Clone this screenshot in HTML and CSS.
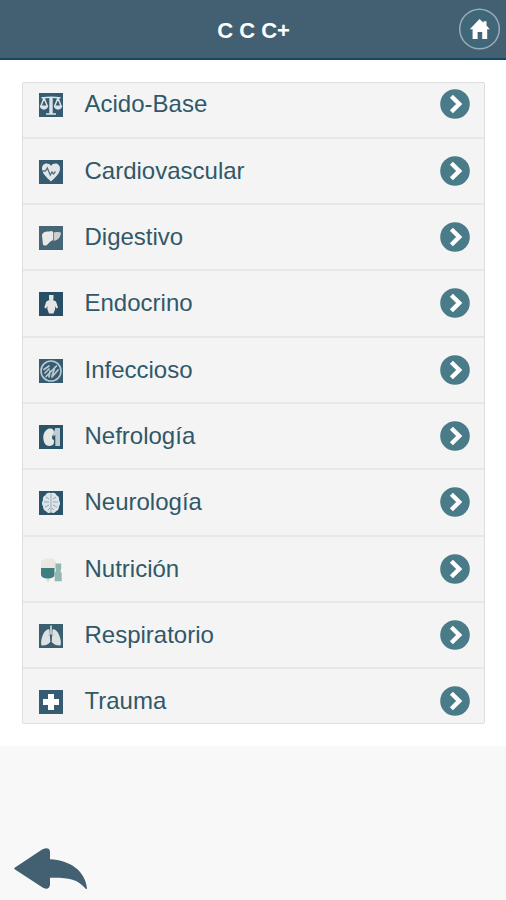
FILE: index.html
```html
<!DOCTYPE html>
<html lang="es">
<head>
<meta charset="utf-8">
<title>C C C+</title>
<link rel="stylesheet" href="styles.css">
</head>
<body>
<svg class="defs" aria-hidden="true">
  <symbol id="chevron" viewBox="0 0 30 30"><circle cx="15" cy="15" r="14.8" fill="#4a7b89"/><path d="M11.400 7.300l7.800 7.700-7.800 7.700" fill="none" stroke="#fff" stroke-width="4.400"/></symbol>
</svg>
<header class="bar">
  <h1 class="title">C C C+</h1>
  <a class="home" href="#" aria-label="Inicio"><svg viewBox="0 0 42 42"><circle cx="21.500" cy="21" r="19.800" fill="#406777" stroke="#9babb5" stroke-width="1.5"/><path d="M21.500 11l4 3.800v-1.600h3v4.400l3.300 3.700h-2.600V31h-5v-7h-4.600v7h-5v-9.700h-2.800z" fill="#fff"/></svg></a>
</header>
<main class="content">
  <ul class="list">
    <li class="row"><svg class="icon" viewBox="0 0 24 24"><path fill="#355c70" d="M0 0h24v24H0z"/><path d="M2.500 4.800c4 0 6-.5 9.500-.5s5.500.5 9.500.5M7 21h10M5 5l-3 8M5 5l3.300 8M19 5l-3.300 8M19 5l3 8" fill="none" stroke="#dde3e6" stroke-width="1.500"/><path d="M10.300 4.500h3.400V21h-3.400zM.7 12.500h8.500c0 5.500-8.500 5.500-8.500 0zM14.800 12.500h8.500c0 5.500-8.500 5.500-8.500 0z" fill="#dde3e6"/></svg><span class="label">Acido-Base</span><svg class="go"><use href="#chevron"/></svg></li>
    <li class="row"><svg class="icon" viewBox="0 0 24 24"><path fill="#355c70" d="M0 0h24v24H0z"/><path d="M12 21.500C7 17 3 13 3 8.500 3 3 9.500 2 12 6c2.500-4 9-3 9 2.500 0 4.500-4 8.500-9 13z" fill="#e3e6e8"/><path d="M3 11h3.500l1.800-3 3 7 1.700-3 1.500 2 2-2.500" fill="none" stroke="#557483" stroke-width="1.300"/></svg><span class="label">Cardiovascular</span><svg class="go"><use href="#chevron"/></svg></li>
    <li class="row"><svg class="icon" viewBox="0 0 24 24"><path fill="#466575" d="M0 0h24v24H0z"/><path d="M3 9.500c.5-3.500 4-4.200 7.300-3.900 1.500-1 3-.5 4 .7L14 14c-2.500 1-4 3-5.800 4.700-1.700 1.500-3.900 1-4.300-.7z" fill="#e9e9e9"/><path d="M15 6.500c3-.5 5.500-.7 7 .3-.2 4-3.200 7.700-7.300 8z" fill="#cbd0d3"/></svg><span class="label">Digestivo</span><svg class="go"><use href="#chevron"/></svg></li>
    <li class="row"><svg class="icon" viewBox="0 0 24 24"><path fill="#294f67" d="M0 0h24v24H0z"/><path d="M10 3h4.500v3.500L14 8l3 1.500 2 6-1.700 1-1.400-2.500.3 3-1.700 4.500H10L8.300 17l.3-3-1.600 2.500-1.700-1 2-6 3-1.500-.3-1.500z" fill="#e4e4e2"/></svg><span class="label">Endocrino</span><svg class="go"><use href="#chevron"/></svg></li>
    <li class="row"><svg class="icon" viewBox="0 0 24 24"><path fill="#355c70" d="M0 0h24v24H0z"/><g fill="none" stroke="#bdc8ce"><circle cx="12" cy="12" r="10" stroke-width="1.600"/><path d="M5 10.500L10 7M7 17.500L17.500 7M13 18l6-7M6 14l4-4M11 12l-1 6M16 8l-3 9" stroke-width="1.700" stroke-linecap="round"/></g></svg><span class="label">Infeccioso</span><svg class="go"><use href="#chevron"/></svg></li>
    <li class="row"><svg class="icon" viewBox="0 0 24 24"><path fill="#295469" d="M0 0h24v24H0z"/><path d="M14.800 9c1-3-1-6-4-5.500-4 .6-6.500 4.500-6.500 9 0 5 2.500 8.500 6 8.500 4 0 5.300-3 4.500-6-1.500-.3-2-1.700-1.700-3 .2-1.500.7-2.400 1.700-3z" fill="#e6e8e6"/><path d="M16.300 3H21v18h-4.700V10l-2 1.500V9z" fill="#bfcbd1"/></svg><span class="label">Nefrología</span><svg class="go"><use href="#chevron"/></svg></li>
    <li class="row"><svg class="icon" viewBox="0 0 24 24"><path fill="#2b5369" d="M0 0h24v24H0z"/><path d="M12 2.200c3-1.400 5 .3 5.500 2 2.500.8 3 3.500 2.500 5 1.700 2 1 5 0 6 0 3-1.500 4.500-3 5-1.500 2.300-4 2-5 1-1 1-3.500 1.300-5-1-1.500-.5-3-2-3-5-1-1-1.700-4 0-6-.5-1.500 0-4.200 2.500-5 .5-1.700 2.500-3.400 5.500-2z" fill="#dce4e9"/><path d="M12 3v18M7 6l3 2M17 6l-3 2M5 11h5M19 11h-5M6 16l4-2M18 16l-4-2M9 19l2-2M15 19l-2-2" fill="none" stroke="#8fa4af" stroke-width=".9"/></svg><span class="label">Neurología</span><svg class="go"><use href="#chevron"/></svg></li>
    <li class="row"><svg class="icon" viewBox="0 0 24 24"><path d="M5 .5h10v2h2v8H2v-8h3z" fill="#ece6e0"/><path d="M2 10h13.500v6.500c0 3-3 3.500-5 4H7.200c-3-.5-5.200-1.500-5.200-4z" fill="#3d7f80"/><path d="M7.500 21h3l-1 3h-1z" fill="#e3d4c9"/><path d="M16.500 5.500h5.700v5l-.7 3 1.200 2v7.800h-7v-8l1.300-2.500-.5-3z" fill="#91b7b1"/></svg><span class="label">Nutrición</span><svg class="go"><use href="#chevron"/></svg></li>
    <li class="row"><svg class="icon" viewBox="0 0 24 24"><path fill="#3a6070" d="M0 0h24v24H0z"/><path d="M10.500 5.500c-3-1-6 3-7.500 8-1 3-1.300 6.500-.3 8 2.300.5 6.600-.8 8.600-3.500zM13.500 5.500c3-1 6 3 7.500 8 1 3 1.300 6.500.3 8-2.300.5-6.600-.8-8.600-3.500z" fill="#dce1e3"/><path d="M11 1.500h2V9l2 2-1 1-2-2-2 2-1-1 2-2z" fill="#b7c4ca"/></svg><span class="label">Respiratorio</span><svg class="go"><use href="#chevron"/></svg></li>
    <li class="row"><svg class="icon" viewBox="0 0 24 24"><path fill="#355c73" d="M0 0h24v24H0z"/><path d="M9 4h6v5h5v6h-5v5H9v-5H4V9h5z" fill="#fff"/></svg><span class="label">Trauma</span><svg class="go"><use href="#chevron"/></svg></li>
  </ul>
</main>
<footer class="footer">
  <a class="back" href="#" aria-label="Volver"><svg viewBox="0 0 74 42"><path d="M1 19.500L28.500 1.300q6.500-3 7.500 2.200v7.700C56 12 71.500 23 73 40.500q-.5 1-1.500 0C63 30.500 53 29.500 36 29.800v7.200q-1 5.500-7 2.700L1 21.500q-1.500-1 0-2z" fill="#426072"/></svg></a>
</footer>
</body>
</html>
```

FILE: styles.css
```css
* {
  box-sizing: border-box;
}

body {
  margin: 0;
  height: 900px;
  display: flex;
  flex-direction: column;
  background: #f8f8f8;
  color: #315868;
  font-family: "Liberation Sans", Arial, sans-serif;
}

.defs {
  position: absolute;
  width: 0;
  height: 0;
}

.bar {
  flex: none;
  height: 60px;
  display: grid;
  grid-template-columns: 46px 1fr 46px;
  align-items: center;
  background: #426072;
  border-bottom: 2px solid #14485c;
}

.title {
  grid-column: 2;
  margin: 4px 0 0 1px;
  color: #fff;
  font-size: 22px;
  line-height: 26px;
  text-align: center;
}

.home {
  width: 42px;
  height: 42px;
  margin-left: -2px;
}

.home svg,
.back svg {
  display: block;
  width: 100%;
  height: 100%;
}

.content {
  flex: none;
  height: 686px;
  padding: 22px 21px 0 22px;
  background: #fff;
}

.list {
  height: 642px;
  margin: 0;
  padding: 0;
  overflow: hidden;
  list-style: none;
  background: #f4f4f4;
  border: 1px solid #dedede;
  border-radius: 2px;
}

.row {
  height: 66.35px;
  padding: 0 14px 0 16px;
  display: flex;
  align-items: center;
  border-bottom: 2px solid #e7e7e7;
}

.row:first-child {
  margin-top: -10.8px;
}

.icon {
  flex: none;
  width: 24px;
  height: 24px;
  margin-top: 2px;
}

.label {
  flex: 1;
  margin-left: 21.5px;
  font-size: 24px;
  line-height: 28px;
}

.go {
  flex: none;
  width: 30px;
  height: 30px;
}

.footer {
  flex: 1;
  display: flex;
  align-items: flex-end;
  padding: 0 14px 10px;
}

.back {
  width: 74px;
  height: 42px;
}
```
